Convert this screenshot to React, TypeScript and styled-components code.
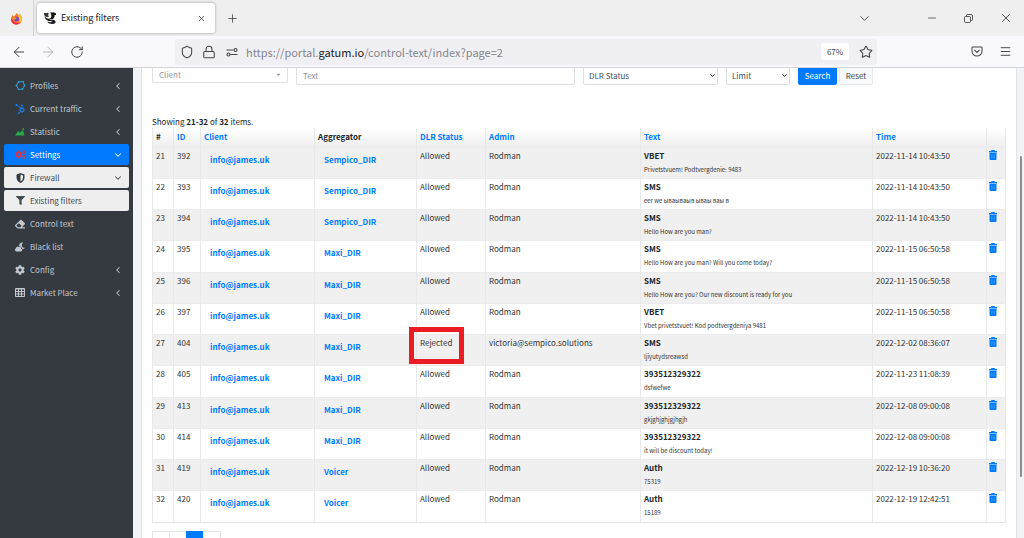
import React from "react";
import styled, { createGlobalStyle, css } from "styled-components";
import {
  FaHubspot,
  FaCogs,
  FaFilter,
  FaEraser,
  FaCloudMoon,
  FaCog,
  FaCaretDown,
} from "react-icons/fa";
import {
  ArrowLeft,
  ArrowRight,
  ChevronDown,
  ChevronLeft,
  Lock,
  Menu,
  Minus,
  Plus,
  RotateCw,
  Shield,
  Star,
  X,
} from "lucide-react";

const blue = "#007bff";

const GlobalStyle = createGlobalStyle`
  * { box-sizing: border-box; }
  body { margin: 0; overflow: hidden; }
  body, button, input, select {
    font-family: "Noto Sans CJK SC", "Open Sans", sans-serif;
  }
  button { border: 0; padding: 0; background: none; color: inherit; cursor: pointer; }
  a { color: ${blue}; text-decoration: none; }
`;

const Browser = styled.div`
  display: flex;
  flex-direction: column;
  height: 100vh;
  overflow: hidden;
  background: #f1f3f6;
`;

const TabStrip = styled.header`
  display: flex;
  align-items: center;
  flex: none;
  height: 36px;
  background: #efefef;
  color: #444;
`;

const BrandSlot = styled.div`
  display: flex;
  align-items: center;
  justify-content: center;
  width: 34px;
  height: 36px;
  border-right: 1px solid #d4d4d4;
`;

const Tab = styled.div`
  display: flex;
  align-items: center;
  gap: 4px;
  width: 178px;
  height: 30px;
  margin-left: 3px;
  padding: 0 8px 0 6px;
  border-radius: 3px;
  background: #fff;
  box-shadow: 0 0 3px #999;
  font-size: 9px;
  color: #222;
`;

const TabTitle = styled.span`
  flex: 1;
  line-height: 14px;
`;

const IconButton = styled.button<{ $w?: number }>`
  display: flex;
  align-items: center;
  justify-content: center;
  flex: none;
  width: ${(p) => p.$w ?? 20}px;
  height: 20px;
`;

const WindowControls = styled.div`
  display: flex;
  margin-left: auto;
`;

const Toolbar = styled.nav`
  display: flex;
  align-items: center;
  flex: none;
  height: 32px;
  padding: 0 9px 0 5px;
  border-bottom: 1px solid #d3d5dc;
  background: #f9f9fb;
  color: #444;
`;

const AddressBar = styled.div`
  display: flex;
  align-items: center;
  flex: 1;
  height: 26px;
  margin-left: 84px;
  padding: 0 1px;
  border-radius: 3px;
  background: #f0f0f4;
`;

const Address = styled.div`
  flex: 1;
  margin-left: 3px;
  font-size: 11px;
  line-height: 18px;
  color: #85858c;
  b {
    font-weight: 400;
    color: #222;
  }
`;

const Zoom = styled.button`
  width: 28px;
  height: 17px;
  margin-right: 7px;
  border-radius: 3px;
  background: #fff;
  font-size: 8px;
  line-height: 16px;
`;

const ToolbarEnd = styled.div`
  display: flex;
  gap: 8px;
  margin-left: 90px;
`;

const Viewport = styled.div`
  display: flex;
  flex: 1;
  min-height: 0;
  overflow: hidden;
`;

const Sidebar = styled.aside`
  display: flex;
  flex-direction: column;
  flex: none;
  gap: 2px;
  width: 133px;
  padding: 7px 4px;
  background: #343a40;
`;

const NavItem = styled.a<{ $tone?: "active" | "open" }>`
  display: flex;
  align-items: center;
  height: 21px;
  padding: 0 6px 0 10px;
  border-radius: 2px;
  font-size: 8px;
  line-height: 12px;
  color: #c2c7d0;
  ${(p) =>
    p.$tone === "active" &&
    css`
      background: ${blue};
      color: #fff;
    `}
  ${(p) =>
    p.$tone === "open" &&
    css`
      background: #eeeeee;
      color: #444a50;
    `}
`;

const NavIcon = styled.span<{ $color?: string }>`
  display: flex;
  justify-content: center;
  width: 12px;
  margin-right: 4px;
  color: ${(p) => p.$color ?? "inherit"};
`;

const NavLabel = styled.span`
  flex: 1;
`;

const Main = styled.main`
  flex: 1;
  min-width: 0;
  margin-left: 8px;
  padding: 0 10px;
  border-left: 1px solid #dfe2e6;
  border-right: 1px solid #dfe2e6;
  background: #fff;
`;

const ScrollTrack = styled.div`
  flex: none;
  width: 7px;
  padding: 88px 1px 0 3px;
`;

const ScrollThumb = styled.div`
  width: 2px;
  height: 321px;
  border-radius: 1px;
  background: #8b8d92;
`;

const Filters = styled.form`
  display: flex;
  gap: 8px;
  margin-top: -3px;
`;

const field = css`
  height: 20px;
  border: 1px solid #dcdfe3;
  border-radius: 2px;
  background: #fff;
  font-size: 8px;
  color: #495057;
`;

const ClientPicker = styled.button`
  ${field}
  display: flex;
  align-items: center;
  justify-content: space-between;
  width: 136px;
  height: 18px;
  padding: 0 5px 0 6px;
  color: #999;
`;

const TextField = styled.input`
  ${field}
  flex: 1;
  min-width: 0;
  padding: 0 6px;
  &::placeholder {
    color: #8d949b;
    opacity: 1;
  }
`;

const SelectWrap = styled.div<{ $w: number }>`
  display: grid;
  width: ${(p) => p.$w}px;
  align-items: center;
  svg {
    grid-area: 1 / 1;
    justify-self: end;
    margin-right: 2px;
    pointer-events: none;
  }
`;

const Select = styled.select`
  ${field}
  grid-area: 1 / 1;
  width: 100%;
  padding: 0 5px;
  appearance: none;
`;

const Actions = styled.div`
  display: flex;
  gap: 2px;
  margin-right: 133px;
`;

const ActionButton = styled.button<{ $primary?: boolean }>`
  height: 20px;
  padding: 0;
  width: ${(p) => (p.$primary ? 39 : 34)}px;
  border: 1px solid ${(p) => (p.$primary ? blue : "#e6e8ea")};
  border-radius: 2px;
  background: ${(p) => (p.$primary ? blue : "#f8f9fa")};
  color: ${(p) => (p.$primary ? "#fff" : "#444")};
  font-size: 8px;
`;

const Summary = styled.p`
  margin: 31px 0 0;
  font-size: 8px;
  line-height: 12px;
  color: #212529;
`;

const Table = styled.table`
  width: 100%;
  table-layout: fixed;
  border-spacing: 0;
  border-bottom: 1px solid #e2e5e8;
  font-size: 8px;
  line-height: 12px;
  color: #333;
`;

const Th = styled.th`
  height: 19px;
  padding: 3px 3px 4px;
  border-left: 1px solid #e6e8ea;
  background: linear-gradient(#fff, #eeeeee);
  text-align: left;
  color: #212529;
  &:last-child {
    border-right: 1px solid #e6e8ea;
  }
`;

const Row = styled.tr`
  height: 31px;
  background: #fff;
  &:nth-child(odd) {
    background: #f0f0f0;
  }
  &:nth-child(4n) {
    height: 32px;
  }
`;

const Td = styled.td`
  padding: 2px 3px 0;
  border-left: 1px solid #e6e8ea;
  border-top: 1px solid #ececee;
  vertical-align: top;
  white-space: nowrap;
  &:last-child {
    border-right: 1px solid #e6e8ea;
  }
`;

const LinkCell = styled(Td)`
  padding: 6px 9px 0;
  font-weight: 700;
`;

const StatusCell = styled(Td)`
  position: relative;
`;

const Highlight = styled.span`
  position: absolute;
  z-index: 1;
  top: -8px;
  left: -8px;
  width: 55px;
  height: 37px;
  border: 5px solid #ec1c24;
`;

const Sender = styled.div`
  font-weight: 700;
  color: #212529;
`;

const Message = styled.div`
  margin-top: 2px;
  font-size: 6px;
`;

const DeleteButton = styled.button`
  display: block;
  margin-left: -1px;
  color: ${blue};
  svg {
    display: block;
  }
`;

const Pager = styled.nav`
  display: flex;
  margin-top: 8px;
`;

const PageLink = styled.a<{ $current?: boolean }>`
  width: 18px;
  height: 36px;
  padding-top: 11px;
  border: 1px solid ${(p) => (p.$current ? blue : "#e2e5e8")};
  margin-right: -1px;
  background: ${(p) => (p.$current ? blue : "#fff")};
  color: ${(p) => (p.$current ? "#fff" : blue)};
  font-size: 8px;
  line-height: 12px;
  text-align: center;
`;

const FirefoxMark = () => (
  <svg width="13" height="13" viewBox="0 0 26 26" aria-hidden="true">
    <path d="M13 2c2 2 3 3 4 5 2-1 2-2 2-4 4 4 6 8 5 13-1 5-5 9-11 9S2 21 2 15c0-4 1-7 4-10 0 2 0 3 1 4 2-1 4-2 6-7z" fill="#ff7a1f" />
    <path d="M18 3c5 4 7 9 5 14-1 3-3 6-6 7 3-5 3-11-1-16 2-1 2-3 2-5z" fill="#ffc52f" />
    <path d="M2 13c0 7 4 12 11 12 4 0 7-2 9-5-6 4-13 2-16-3-1-2-3-3-4-4z" fill="#f0284f" />
    <circle cx="13" cy="14" r="5" fill="#7447c9" />
    <path d="M7 11c3-1 5 0 7 2-3 0-4 1-5 3-2-1-3-3-2-5z" fill="#ff9b2b" />
  </svg>
);

const SiteMark = () => (
  <svg width="14" height="14" viewBox="0 0 28 28" aria-hidden="true">
    <path d="M2 4h10c-2 2-2 5 0 8H7c-4-1-5-4-5-8z" fill="#333" />
    <path d="M3 10c2 4 6 6 11 5l-2 5c-5-1-9-5-9-10z" fill="#111" />
    <path d="M14 3h8q4 0 4 3v2h-3c1 6-3 10-10 8 5-3 5-9 1-13z" fill="#111" />
    <path d="M10 16c4 2 8 1 12 2 5 2 4 8-3 8-6 0-10-2-10-5 4 2 8 2 10 0-5-1-9 0-9-5z" fill="#1b1b1b" />
  </svg>
);

const PermissionsIcon = () => (
  <svg width="12" height="10" viewBox="0 0 24 20" fill="none" stroke="#444" strokeWidth="2.2" aria-hidden="true">
    <path d="M1 6h14M9 15h14" />
    <circle cx="19" cy="6" r="3" />
    <circle cx="5" cy="15" r="3" />
  </svg>
);

const RestoreIcon = () => (
  <svg width="9" height="9" viewBox="0 0 18 18" fill="none" stroke="#444" strokeWidth="1.8" aria-hidden="true">
    <rect x="1" y="5" width="12" height="12" rx="2" />
    <path d="M5 5V3q0-2 2-2h7q3 0 3 3v7q0 2-2 2h-2" />
  </svg>
);

const PocketIcon = () => (
  <svg width="12" height="11" viewBox="0 0 26 24" fill="none" stroke="#444" strokeWidth="2.2" strokeLinecap="round" aria-hidden="true">
    <path d="M4 2h18q2 0 2 2v7a11 11 0 0 1-22 0V4q0-2 2-2z" />
    <path d="M8 9l5 5 5-5" />
  </svg>
);

const ProfilesIcon = () => (
  <svg width="11" height="11" viewBox="0 0 22 22" fill="none" stroke="#2ba3d4" strokeWidth="2" aria-hidden="true">
    <path d="M7 4l9-1 3 8-4 7-8 1-4-8z" />
    <g fill="#2ba3d4" stroke="none">
      <circle cx="7" cy="4" r="2" />
      <circle cx="16" cy="3" r="1.6" />
      <circle cx="19" cy="11" r="2" />
      <circle cx="15" cy="18" r="2" />
      <circle cx="7" cy="19" r="1.6" />
      <circle cx="3" cy="11" r="2" />
    </g>
  </svg>
);

const StatisticIcon = () => (
  <svg width="10" height="9" viewBox="0 0 20 18" fill="#28a745" aria-hidden="true">
    <path d="M0 17l6-9 4 3 6-5 3 11z" />
    <path d="M13 5l5-4v5z" />
  </svg>
);

const ShieldHalfIcon = () => (
  <svg width="9" height="10" viewBox="0 0 18 20" aria-hidden="true">
    <path d="M9 0l8 3v6c0 5-3 9-8 11-5-2-8-6-8-11V3z" fill="#343a40" />
    <path d="M9 3l5 2v4c0 4-2 6-5 8z" fill="#eee" />
  </svg>
);

const GridIcon = () => (
  <svg width="10" height="9" viewBox="0 0 20 18" aria-hidden="true">
    <rect width="20" height="18" rx="2" fill="currentColor" />
    <path
      d="M2 3h4v3H2zM8 3h4v3H8zM14 3h4v3h-4zM2 8h4v3H2zM8 8h4v3H8zM14 8h4v3h-4zM2 13h4v3H2zM8 13h4v3H8zM14 13h4v3h-4z"
      fill="#343a40"
    />
  </svg>
);

const TrashIcon = () => (
  <svg width="8" height="10" viewBox="0 0 16 20" fill="currentColor" aria-hidden="true">
    <path d="M0 2h4l1-2h6l1 2h4v3H0z" />
    <path d="M1 6h14v12q0 2-2 2H3q-2 0-2-2z" />
    <path d="M5 9v8M8 9v8M11 9v8" stroke="#5aabff" strokeWidth="1" />
  </svg>
);

type NavEntry = {
  label: string;
  icon: React.ReactNode;
  color?: string;
  tone?: "active" | "open";
  arrow?: "left" | "down";
};

const navEntries: NavEntry[] = [
  { label: "Profiles", icon: <ProfilesIcon />, arrow: "left" },
  { label: "Current traffic", icon: <FaHubspot size={10} />, color: "#1683f5", arrow: "left" },
  { label: "Statistic", icon: <StatisticIcon />, arrow: "left" },
  { label: "Settings", icon: <FaCogs size={11} />, color: "#dc3545", tone: "active", arrow: "down" },
  { label: "Firewall", icon: <ShieldHalfIcon />, tone: "open", arrow: "down" },
  { label: "Existing filters", icon: <FaFilter size={9} />, tone: "open" },
  { label: "Control text", icon: <FaEraser size={10} /> },
  { label: "Black list", icon: <FaCloudMoon size={10} /> },
  { label: "Config", icon: <FaCog size={10} />, arrow: "left" },
  { label: "Market Place", icon: <GridIcon />, arrow: "left" },
];

type Filter = [number, number, string, string, string, string, string, string];

const filters: Filter[] = [
  [21, 392, "Sempico_DIR", "Allowed", "Rodman", "VBET", "Privetstvuem! Podtvergdenie: 9483", "2022-11-14 10:43:50"],
  [22, 393, "Sempico_DIR", "Allowed", "Rodman", "SMS", "eer we ываываыв ываы ваы в", "2022-11-14 10:43:50"],
  [23, 394, "Sempico_DIR", "Allowed", "Rodman", "SMS", "Hello How are you man?", "2022-11-14 10:43:50"],
  [24, 395, "Maxi_DIR", "Allowed", "Rodman", "SMS", "Hello How are you man? Will you come today?", "2022-11-15 06:50:58"],
  [25, 396, "Maxi_DIR", "Allowed", "Rodman", "SMS", "Hello How are you? Our new discount is ready for you", "2022-11-15 06:50:58"],
  [26, 397, "Maxi_DIR", "Allowed", "Rodman", "VBET", "Vbet privetstvuet! Kod podtvergdeniya 9481", "2022-11-15 06:50:58"],
  [27, 404, "Maxi_DIR", "Rejected", "victoria@sempico.solutions", "SMS", "ljiyutydsreawsd", "2022-12-02 08:36:07"],
  [28, 405, "Maxi_DIR", "Allowed", "Rodman", "393512329322", "dsfwefwe", "2022-11-23 11:08:39"],
  [29, 413, "Maxi_DIR", "Allowed", "Rodman", "393512329322", "gkjghjghjgjhgjh", "2022-12-08 09:00:08"],
  [30, 414, "Maxi_DIR", "Allowed", "Rodman", "393512329322", "it will be discount today!", "2022-12-08 09:00:08"],
  [31, 419, "Voicer", "Allowed", "Rodman", "Auth", "75319", "2022-12-19 10:36:20"],
  [32, 420, "Voicer", "Allowed", "Rodman", "Auth", "15189", "2022-12-19 12:42:51"],
];

const columns: { label: string; width?: number; sortable?: boolean }[] = [
  { label: "#", width: 21 },
  { label: "ID", width: 27, sortable: true },
  { label: "Client", width: 114, sortable: true },
  { label: "Aggregator", width: 102 },
  { label: "DLR Status", width: 69, sortable: true },
  { label: "Admin", width: 155, sortable: true },
  { label: "Text", sortable: true },
  { label: "Time", width: 114, sortable: true },
  { label: "", width: 20 },
];

export default function App() {
  return (
    <Browser>
      <GlobalStyle />
      <TabStrip>
        <BrandSlot>
          <FirefoxMark />
        </BrandSlot>
        <Tab>
          <SiteMark />
          <TabTitle>Existing filters</TabTitle>
          <IconButton $w={12} aria-label="Close tab">
            <X size={9} />
          </IconButton>
        </Tab>
        <IconButton $w={34} aria-label="New tab">
          <Plus size={13} strokeWidth={1.5} />
        </IconButton>
        <WindowControls>
          <IconButton $w={97} aria-label="List all tabs">
            <ChevronDown size={15} strokeWidth={1.5} />
          </IconButton>
          <IconButton $w={37} aria-label="Minimize">
            <Minus size={12} strokeWidth={1.5} />
          </IconButton>
          <IconButton $w={37} aria-label="Restore">
            <RestoreIcon />
          </IconButton>
          <IconButton $w={37} aria-label="Close window">
            <X size={14} strokeWidth={1.5} />
          </IconButton>
        </WindowControls>
      </TabStrip>
      <Toolbar>
        <IconButton $w={28} aria-label="Back">
          <ArrowLeft size={16} strokeWidth={1.5} />
        </IconButton>
        <IconButton $w={29} aria-label="Forward" disabled>
          <ArrowRight size={16} strokeWidth={1.5} color="#b5b5ba" />
        </IconButton>
        <IconButton $w={29} aria-label="Reload">
          <RotateCw size={14} strokeWidth={1.7} />
        </IconButton>
        <AddressBar>
          <IconButton $w={22} aria-label="Tracking protection">
            <Shield size={14} strokeWidth={1.8} />
          </IconButton>
          <IconButton $w={22} aria-label="Connection security">
            <Lock size={14} strokeWidth={1.8} />
          </IconButton>
          <IconButton $w={23} aria-label="Permissions">
            <PermissionsIcon />
          </IconButton>
          <Address>
            https://portal.<b>gatum.io</b>/control-text/index?page=2
          </Address>
          <Zoom>67%</Zoom>
          <IconButton $w={20} aria-label="Bookmark">
            <Star size={14} strokeWidth={1.8} />
          </IconButton>
        </AddressBar>
        <ToolbarEnd>
          <IconButton aria-label="Save to Pocket">
            <PocketIcon />
          </IconButton>
          <IconButton aria-label="Menu">
            <Menu size={13} strokeWidth={1.8} />
          </IconButton>
        </ToolbarEnd>
      </Toolbar>
      <Viewport>
        <Sidebar>
          {navEntries.map((entry) => (
            <NavItem key={entry.label} href="#" $tone={entry.tone}>
              <NavIcon $color={entry.color}>{entry.icon}</NavIcon>
              <NavLabel>{entry.label}</NavLabel>
              {entry.arrow === "left" && <ChevronLeft size={10} strokeWidth={2.5} />}
              {entry.arrow === "down" && <ChevronDown size={10} strokeWidth={2.5} />}
            </NavItem>
          ))}
        </Sidebar>
        <Main>
          <Filters onSubmit={(e) => e.preventDefault()}>
            <ClientPicker type="button">
              Client
              <FaCaretDown size={7} />
            </ClientPicker>
            <TextField placeholder="Text" aria-label="Text" />
            <SelectWrap $w={135}>
              <Select aria-label="DLR Status">
                <option>DLR Status</option>
              </Select>
              <ChevronDown size={7} strokeWidth={3} />
            </SelectWrap>
            <SelectWrap $w={64}>
              <Select aria-label="Limit">
                <option>Limit</option>
              </Select>
              <ChevronDown size={7} strokeWidth={3} />
            </SelectWrap>
            <Actions>
              <ActionButton $primary type="submit">
                Search
              </ActionButton>
              <ActionButton type="reset">Reset</ActionButton>
            </Actions>
          </Filters>
          <Summary>
            Showing <b>21-32</b> of <b>32</b> items.
          </Summary>
          <Table>
            <colgroup>
              {columns.map((c, i) => (
                <col key={i} width={c.width} />
              ))}
            </colgroup>
            <thead>
              <tr>
                {columns.map((c, i) => (
                  <Th key={i}>{c.sortable ? <a href="#">{c.label}</a> : c.label}</Th>
                ))}
              </tr>
            </thead>
            <tbody>
              {filters.map(([n, id, aggregator, status, admin, sender, message, time]) => (
                <Row key={id}>
                  <Td>{n}</Td>
                  <Td>{id}</Td>
                  <LinkCell>
                    <a href="#">info@james.uk</a>
                  </LinkCell>
                  <LinkCell>
                    <a href="#">{aggregator}</a>
                  </LinkCell>
                  <StatusCell>
                    {status}
                    {status === "Rejected" && <Highlight />}
                  </StatusCell>
                  <Td>{admin}</Td>
                  <Td>
                    <Sender>{sender}</Sender>
                    <Message>{message}</Message>
                  </Td>
                  <Td>{time}</Td>
                  <Td>
                    <DeleteButton aria-label={`Delete filter ${id}`}>
                      <TrashIcon />
                    </DeleteButton>
                  </Td>
                </Row>
              ))}
            </tbody>
          </Table>
          <Pager aria-label="Pages">
            <PageLink href="#">«</PageLink>
            <PageLink href="#">1</PageLink>
            <PageLink href="#" $current>
              2
            </PageLink>
            <PageLink href="#">»</PageLink>
          </Pager>
        </Main>
        <ScrollTrack>
          <ScrollThumb />
        </ScrollTrack>
      </Viewport>
    </Browser>
  );
}
